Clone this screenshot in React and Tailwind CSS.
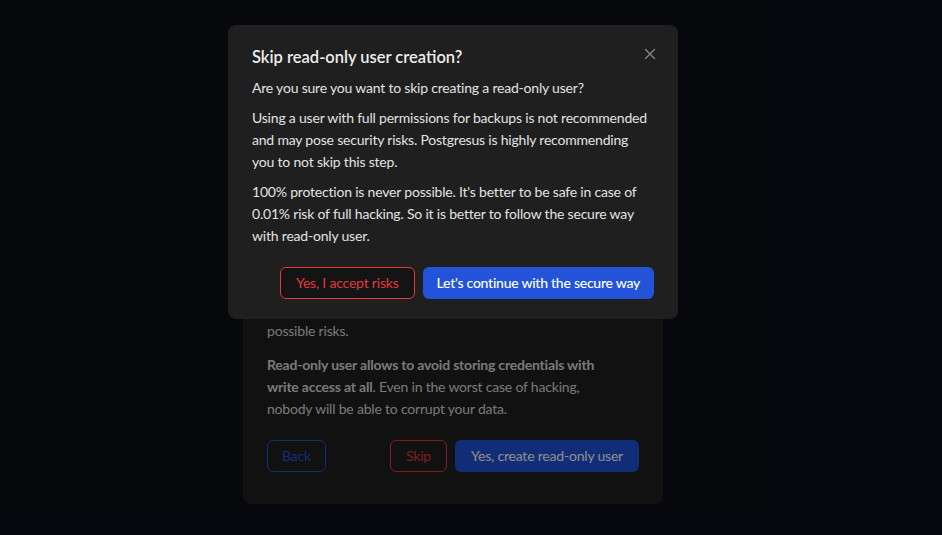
import { X } from 'lucide-react';

const font = { fontFamily: 'Lato, "Open Sans", sans-serif' };

export default function App() {
  return (
    <div
      className="relative h-[535px] w-full overflow-hidden bg-[#0c0f17] text-[14px] leading-[22px] tracking-[-0.2px]"
      style={font}
    >
      {/* Page behind the modal */}
      <div className="flex h-full flex-col items-center justify-end pr-[36px] pb-[31px]">
        <div className="w-[420px] rounded-lg bg-[#1f1f1f] px-6 pt-6 pb-8 text-[#dcdcdc]">
          <h2 className="mb-3 text-[18px] font-semibold">Create read-only user</h2>
          <p className="mb-3">
            A read-only user is a PostgreSQL user with limited permissions that can only read data from your database.
          </p>
          <p className="mb-3">
            Postgresus needs only read access to make backups, so a read-only user
            <br />
            is enough and it is the safest way to connect. It minimizes the
            <br />
            possible risks.
          </p>
          <p>
            <span className="font-bold">Read-only user allows to avoid storing credentials with</span>
            <br />
            <span className="font-bold">write access at all</span>. Even in the worst case of hacking,
            <br />
            nobody will be able to corrupt your data.
          </p>
          <div className="mt-5 flex items-center">
            <button className="h-8 rounded-md border border-[#2253d9] px-[14px] text-[#2253d9]">Back</button>
            <div className="ml-auto flex gap-2">
              <button className="h-8 rounded-md border border-[#e0393e] px-[15px] text-[#e0393e]">Skip</button>
              <button className="h-8 rounded-md bg-[#2253d9] px-4 text-white">Yes, create read-only user</button>
            </div>
          </div>
        </div>
      </div>

      {/* Mask + modal */}
      <div className="absolute inset-0 bg-black/45">
        <div className="flex justify-center pt-[25px] pr-[36px]">
          <div className="relative w-[450px] rounded-lg bg-[#1f1f1f] px-6 pt-5 pb-5 text-[#e2e2e2]">
            <button className="absolute top-[20px] right-[19px] text-[#8a8a8a]">
              <X size={18} strokeWidth={1.6} />
            </button>
            <h2 className="mb-2 text-[16.5px] leading-[24px] font-semibold tracking-normal text-[#ececec]">Skip read-only user creation?</h2>
            <p className="mb-2">Are you sure you want to skip creating a read-only user?</p>
            <p className="mb-2">
              Using a user with full permissions for backups is not recommended
              <br />
              and may pose security risks. Postgresus is highly recommending
              <br />
              you to not skip this step.
            </p>
            <p>
              100% protection is never possible. It's better to be safe in case of
              <br />
              0.01% risk of full hacking. So it is better to follow the secure way
              <br />
              with read-only user.
            </p>
            <div className="mt-5 flex justify-end gap-2">
              <button className="h-8 rounded-md border border-[#e0393e] bg-[#141414] px-[15px] text-[#e0393e]">Yes, I accept risks</button>
              <button className="h-8 rounded-md bg-[#2253d9] px-[14px] font-medium tracking-[-0.25px] text-white">Let's continue with the secure way</button>
            </div>
          </div>
        </div>
      </div>
    </div>
  );
}
